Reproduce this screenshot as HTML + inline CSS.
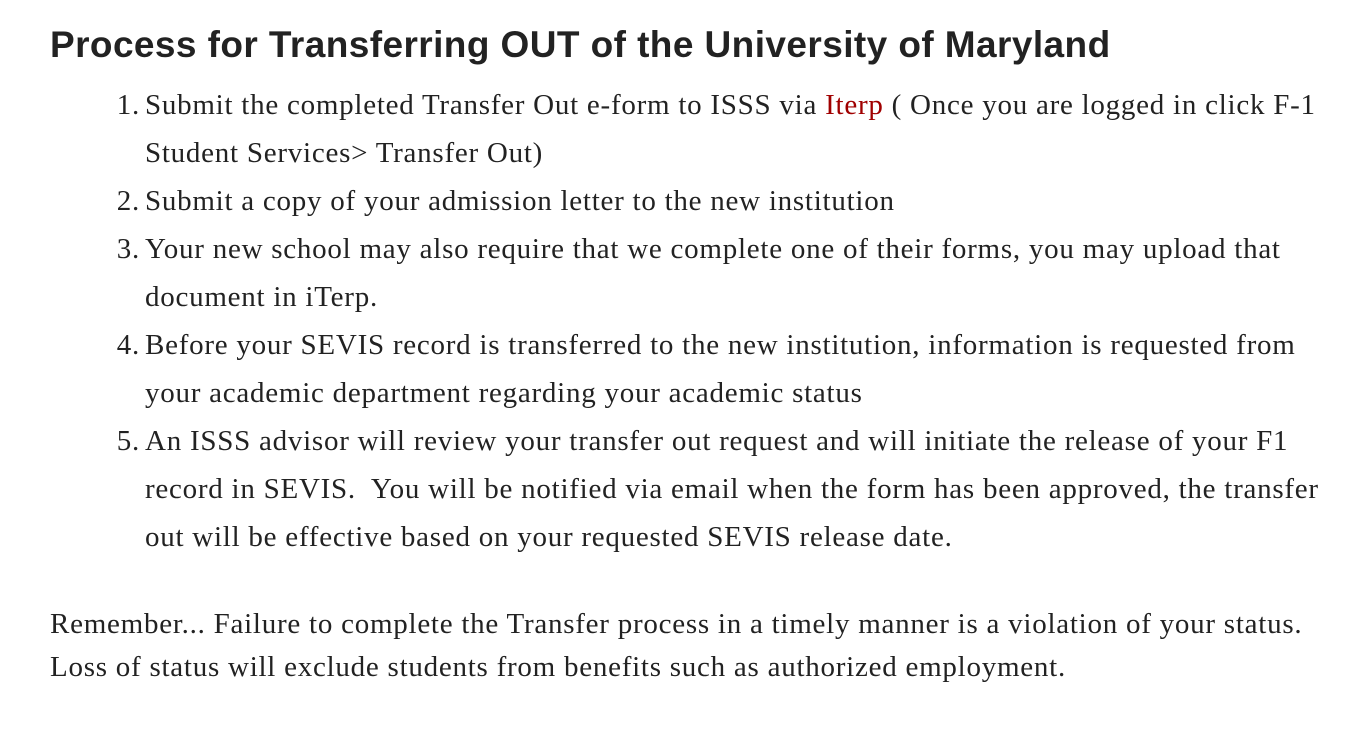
<!DOCTYPE html>
<html><head><meta charset="utf-8"><style>
body{margin:0;background:#fff;width:1352px;height:742px;overflow:hidden;color:#222;}
h1{position:absolute;left:50px;top:21px;margin:0;font:bold 37px/48px "Liberation Sans",sans-serif;color:#222;white-space:nowrap;letter-spacing:0.42px}
.l{position:absolute;font:29px/48px "Liberation Serif",serif;white-space:nowrap;letter-spacing:0.75px}
.n{position:absolute;width:40px;text-align:right;left:100px}
a{color:#a00000;text-decoration:none}
</style></head><body>
<h1>Process for Transferring OUT of the University of Maryland</h1>
<div class="l n" style="top:81px">1.</div>
<div class="l" style="left:145px;top:81px">Submit the completed Transfer Out e-form to ISSS via <a>Iterp</a> ( Once you are logged in click F-1</div>
<div class="l" style="left:145px;top:129px">Student Services&gt; Transfer Out)</div>
<div class="l n" style="top:177px">2.</div>
<div class="l" style="left:145px;top:177px">Submit a copy of your admission letter to the new institution</div>
<div class="l n" style="top:225px">3.</div>
<div class="l" style="left:145px;top:225px">Your new school may also require that we complete one of their forms, you may upload that</div>
<div class="l" style="left:145px;top:273px">document in iTerp.</div>
<div class="l n" style="top:321px">4.</div>
<div class="l" style="left:145px;top:321px">Before your SEVIS record is transferred to the new institution, information is requested from</div>
<div class="l" style="left:145px;top:369px">your academic department regarding your academic status</div>
<div class="l n" style="top:417px">5.</div>
<div class="l" style="left:145px;top:417px">An ISSS advisor will review your transfer out request and will initiate the release of your F1</div>
<div class="l" style="left:145px;top:465px">record in SEVIS.&nbsp; You will be notified via email when the form has been approved, the transfer</div>
<div class="l" style="left:145px;top:513px">out will be effective based on your requested SEVIS release date.</div>
<div class="l" style="left:50px;top:600px">Remember... Failure to complete the Transfer process in a timely manner is a violation of your status.</div>
<div class="l" style="left:50px;top:643px">Loss of status will exclude students from benefits such as authorized employment.</div>
</body></html>
